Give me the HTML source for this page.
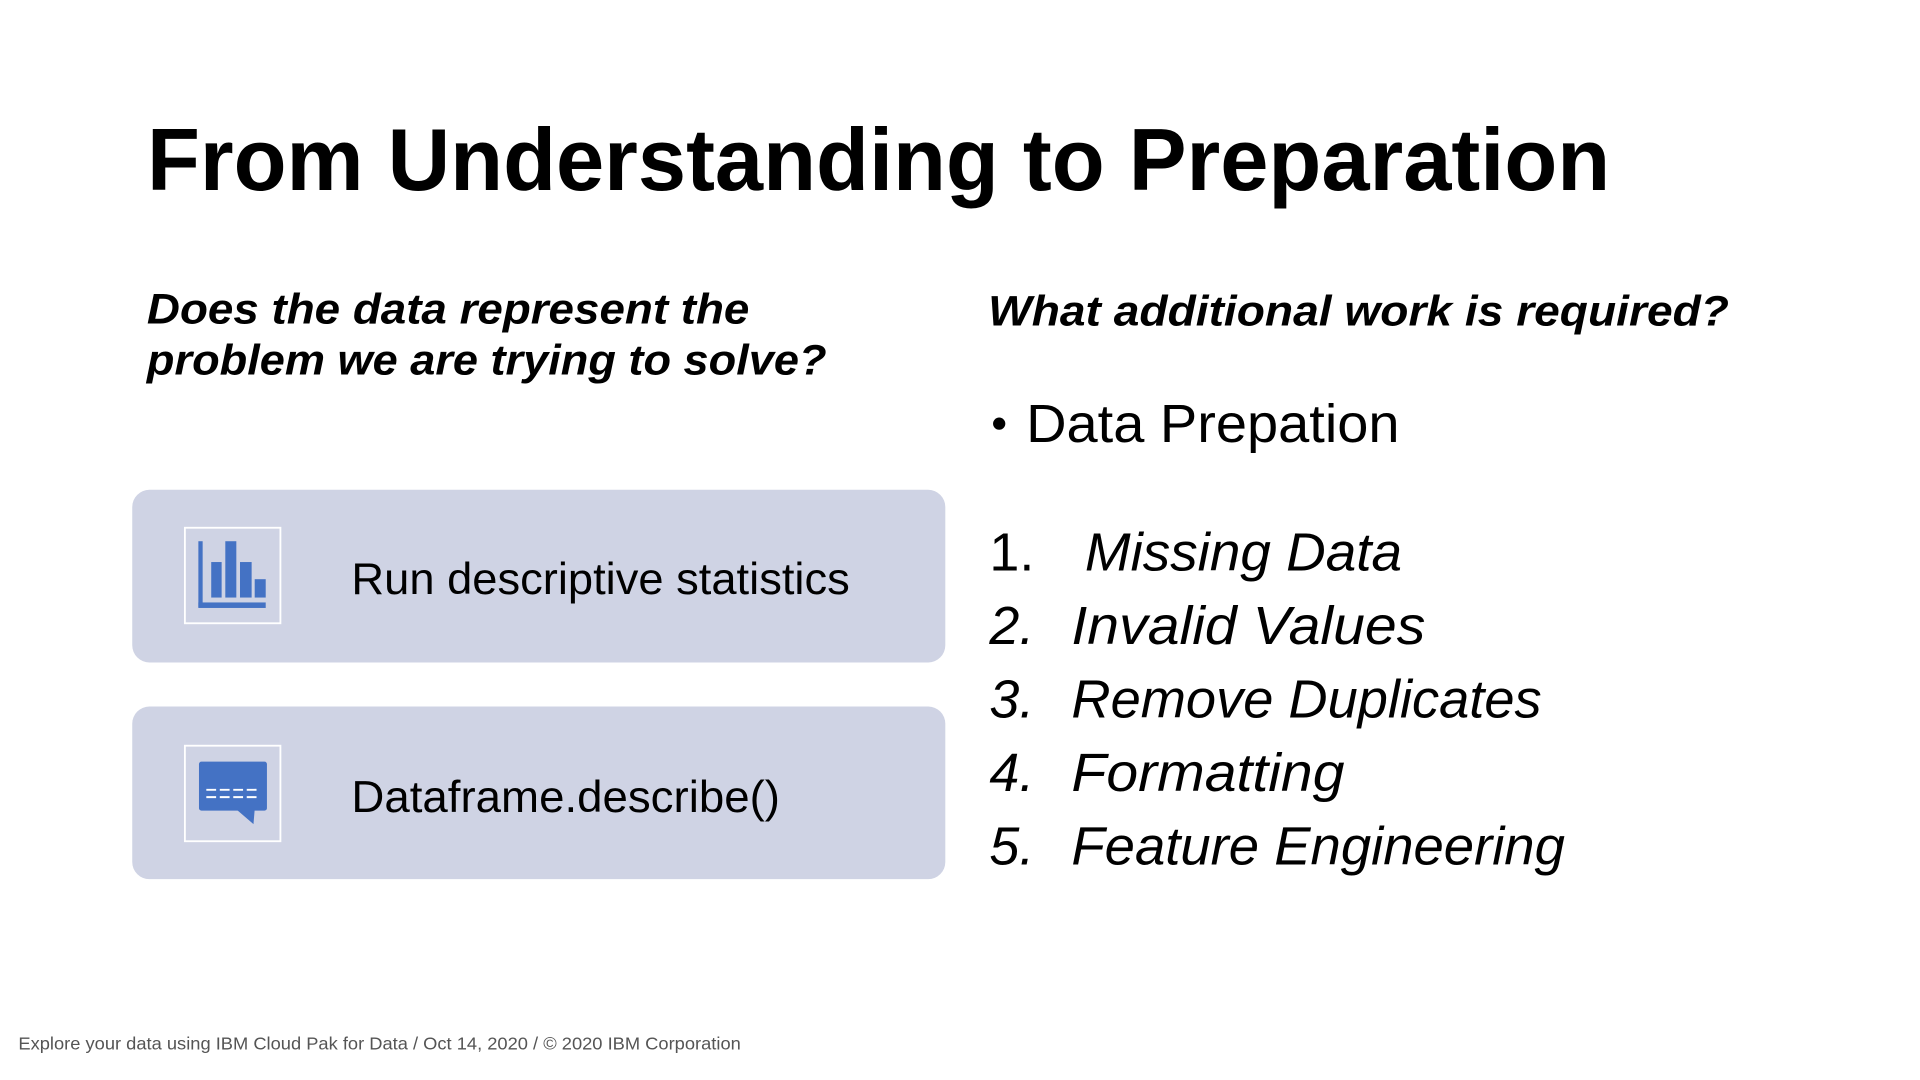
<!DOCTYPE html>
<html><head><meta charset="utf-8"><style>
html,body{margin:0;padding:0;background:#fff;width:1920px;height:1080px;overflow:hidden}
svg{display:block}
text{font-family:"Liberation Sans",sans-serif;fill:#000}
</style></head><body>
<svg width="1920" height="1080" viewBox="0 0 1568 882" xmlns="http://www.w3.org/2000/svg">
<rect width="1568" height="882" fill="#fff"/>
<text x="120" y="155" font-size="72" font-weight="bold" textLength="1195" lengthAdjust="spacingAndGlyphs">From Understanding to Preparation</text>
<text x="120" y="264" font-size="35" font-weight="bold" font-style="italic" textLength="492" lengthAdjust="spacingAndGlyphs">Does the data represent the</text>
<text x="120" y="306" font-size="35" font-weight="bold" font-style="italic" textLength="555" lengthAdjust="spacingAndGlyphs">problem we are trying to solve?</text>
<text x="807" y="266" font-size="35" font-weight="bold" font-style="italic" textLength="605" lengthAdjust="spacingAndGlyphs">What additional work is required?</text>
<circle cx="816" cy="346" r="5" fill="#000"/>
<text x="838" y="361" font-size="44" textLength="305" lengthAdjust="spacingAndGlyphs">Data Prepation</text>

<rect x="108" y="400" width="664" height="141" rx="14" fill="#cfd3e4"/>
<rect x="108" y="577" width="664" height="141" rx="14" fill="#cfd3e4"/>
<rect x="151" y="431" width="78" height="78" fill="none" stroke="#fff" stroke-width="1.5"/>
<rect x="151" y="609" width="78" height="78" fill="none" stroke="#fff" stroke-width="1.5"/>
<g fill="#4472c4">
<rect x="162" y="442" width="3.5" height="54"/>
<rect x="162" y="492" width="55" height="4.5"/>
<rect x="172.5" y="459" width="8.5" height="29"/>
<rect x="184" y="442" width="9" height="46"/>
<rect x="196" y="459" width="9.5" height="29"/>
<rect x="208" y="473" width="9" height="15"/>
<rect x="162.5" y="622" width="55.5" height="40" rx="2"/>
<path d="M193 661 L208 661 L207 673 Z"/>
</g>
<g stroke="#fff" stroke-width="1.6">
<path d="M168.5 645 H211" stroke-dasharray="8 3"/>
<path d="M168.5 651 H211" stroke-dasharray="8 3"/>
</g>
<text x="287" y="485" font-size="36" textLength="407" lengthAdjust="spacingAndGlyphs">Run descriptive statistics</text>
<text x="287" y="663" font-size="36" textLength="350" lengthAdjust="spacingAndGlyphs">Dataframe.describe()</text>

<g font-size="44">
<text x="808" y="466">1.</text>
<text x="808" y="526" font-style="italic">2.</text>
<text x="808" y="586" font-style="italic">3.</text>
<text x="808" y="646" font-style="italic">4.</text>
<text x="808" y="706" font-style="italic">5.</text>
<text x="886" y="466" font-style="italic" textLength="259" lengthAdjust="spacingAndGlyphs">Missing Data</text>
<text x="875" y="526" font-style="italic" textLength="289" lengthAdjust="spacingAndGlyphs">Invalid Values</text>
<text x="875" y="586" font-style="italic" textLength="384" lengthAdjust="spacingAndGlyphs">Remove Duplicates</text>
<text x="875" y="646" font-style="italic" textLength="223" lengthAdjust="spacingAndGlyphs">Formatting</text>
<text x="875" y="706" font-style="italic" textLength="403" lengthAdjust="spacingAndGlyphs">Feature Engineering</text>
</g>
<text x="15" y="857" font-size="14" style="fill:#555" textLength="590" lengthAdjust="spacingAndGlyphs">Explore your data using IBM Cloud Pak for Data / Oct 14, 2020 / © 2020 IBM Corporation</text>
</svg>
</body></html>
